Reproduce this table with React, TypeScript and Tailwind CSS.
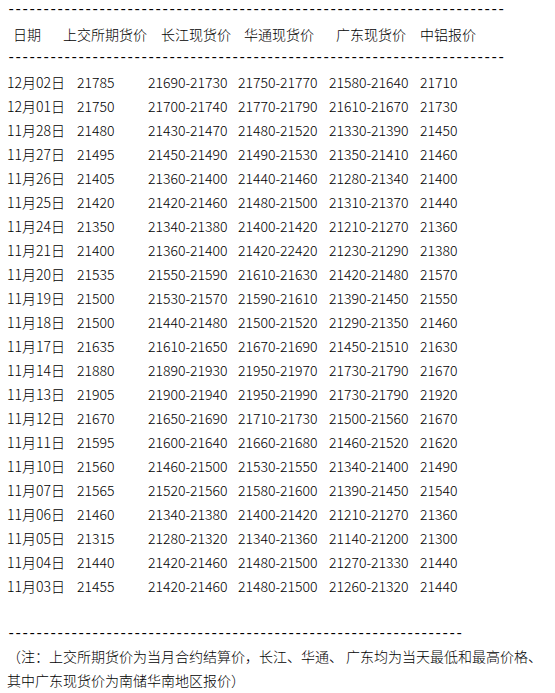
const rows: [string, string, string, string, string, string][] = [
  ["12月02日", "21785", "21690-21730", "21750-21770", "21580-21640", "21710"],
  ["12月01日", "21750", "21700-21740", "21770-21790", "21610-21670", "21730"],
  ["11月28日", "21480", "21430-21470", "21480-21520", "21330-21390", "21450"],
  ["11月27日", "21495", "21450-21490", "21490-21530", "21350-21410", "21460"],
  ["11月26日", "21405", "21360-21400", "21440-21460", "21280-21340", "21400"],
  ["11月25日", "21420", "21420-21460", "21480-21500", "21310-21370", "21440"],
  ["11月24日", "21350", "21340-21380", "21400-21420", "21210-21270", "21360"],
  ["11月21日", "21400", "21360-21400", "21420-22420", "21230-21290", "21380"],
  ["11月20日", "21535", "21550-21590", "21610-21630", "21420-21480", "21570"],
  ["11月19日", "21500", "21530-21570", "21590-21610", "21390-21450", "21550"],
  ["11月18日", "21500", "21440-21480", "21500-21520", "21290-21350", "21460"],
  ["11月17日", "21635", "21610-21650", "21670-21690", "21450-21510", "21630"],
  ["11月14日", "21880", "21890-21930", "21950-21970", "21730-21790", "21670"],
  ["11月13日", "21905", "21900-21940", "21950-21990", "21730-21790", "21920"],
  ["11月12日", "21670", "21650-21690", "21710-21730", "21500-21560", "21670"],
  ["11月11日", "21595", "21600-21640", "21660-21680", "21460-21520", "21620"],
  ["11月10日", "21560", "21460-21500", "21530-21550", "21340-21400", "21490"],
  ["11月07日", "21565", "21520-21560", "21580-21600", "21390-21450", "21540"],
  ["11月06日", "21460", "21340-21380", "21400-21420", "21210-21270", "21360"],
  ["11月05日", "21315", "21280-21320", "21340-21360", "21140-21200", "21300"],
  ["11月04日", "21440", "21420-21460", "21480-21500", "21270-21330", "21440"],
  ["11月03日", "21455", "21420-21460", "21480-21500", "21260-21320", "21440"],
];

function Dashes({ count }: { count: number }) {
  return (
    <div className="h-[24px] leading-[24px] whitespace-pre font-['Liberation_Mono',monospace] text-[14px] tracking-[-1.4px]">
      {"-".repeat(count)}
    </div>
  );
}

export default function App() {
  return (
    <main className="w-[555px] h-[693px] overflow-hidden bg-white pl-[7px] text-black text-[14px] font-light font-['Noto_Sans_CJK_SC',sans-serif]">
      <div className="-mt-[2px]">
        <Dashes count={71} />
      </div>

      {/* header */}
      <div className="grid grid-cols-[50px_98px_83px_92px_84px_1fr] pl-[6px] h-[24px] leading-[24px]">
        <span>日期</span>
        <span>上交所期货价</span>
        <span>长江现货价</span>
        <span>华通现货价</span>
        <span>广东现货价</span>
        <span>中铝报价</span>
      </div>

      <Dashes count={71} />

      <div className="mt-[0px]">
        {rows.map((r) => (
          <div key={r[0]} className="grid grid-cols-[70px_71px_90px_91px_91px_1fr] h-[24px] leading-[24px]">
            {r.map((c, i) => (
              <span key={i}>{c}</span>
            ))}
          </div>
        ))}
      </div>

      <div className="mt-[24px]">
        <Dashes count={65} />
      </div>

      {/* note */}
      <div className="leading-[24px] -mt-[2px]">
        <p className="whitespace-nowrap">（注：上交所期货价为当月合约结算价，长江、华通、 广东均为当天最低和最高价格、</p>
        <p>其中广东现货价为南储华南地区报价）</p>
      </div>
    </main>
  );
}
